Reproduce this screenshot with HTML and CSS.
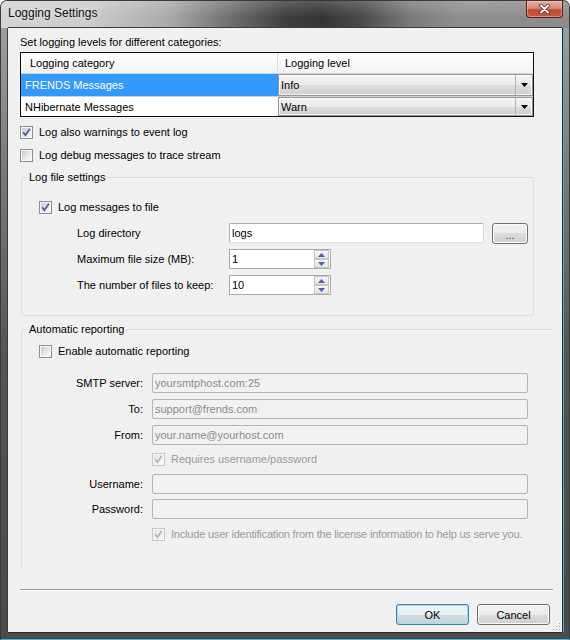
FILE: index.html
```html
<!DOCTYPE html>
<html lang="en">
<head>
  <meta charset="UTF-8" />
  <title>Logging Settings</title>
  <link rel="stylesheet" href="styles.css">
</head>
<body>
  <div class="window">
    <div class="titlebar">
      <span class="title">Logging Settings</span>
      <button class="close" aria-label="Close">
        <svg width="11" height="10" viewBox="0 0 11 10">
          <path d="M2 1.5 L9 8.5 M9 1.5 L2 8.5" stroke="#5b2c24" stroke-width="3.6" stroke-linecap="round" />
          <path d="M2 1.5 L9 8.5 M9 1.5 L2 8.5" stroke="#ffffff" stroke-width="2" stroke-linecap="round" />
        </svg>
      </button>
    </div>

    <div class="client">
      <div class="caption">Set logging levels for different categories:</div>

      <div class="grid">
        <div class="grid-row grid-head">
          <div class="cell col-cat head-cell">Logging category</div>
          <div class="cell col-level head-cell level-head">Logging level</div>
        </div>
        <div class="grid-row row-1">
          <div class="cell col-cat selected">FRENDS Messages</div>
          <div class="cell col-level">
            <div class="combo">
              <span class="combo-text">Info</span>
              <span class="combo-drop"><svg width="7" height="4" viewBox="0 0 7 4"><path d="M0 0 H7 L3.5 4 Z" fill="#000" /></svg></span>
            </div>
          </div>
        </div>
        <div class="grid-row row-2">
          <div class="cell col-cat">NHibernate Messages</div>
          <div class="cell col-level">
            <div class="combo">
              <span class="combo-text">Warn</span>
              <span class="combo-drop"><svg width="7" height="4" viewBox="0 0 7 4"><path d="M0 0 H7 L3.5 4 Z" fill="#000" /></svg></span>
            </div>
          </div>
        </div>
      </div>

      <label class="check check-first">
        <span class="box"><svg width="9" height="9" viewBox="0 0 9 9"><path d="M1.2 4.2 L3.4 7.2 L7.8 0.8" fill="none" stroke="#4c5c8f" stroke-width="1.7" /></svg></span>
        Log also warnings to event log
      </label>
      <label class="check check-second">
        <span class="box"></span>
        Log debug messages to trace stream
      </label>

      <div class="group group-file">
        <span class="group-title">Log file settings</span>
        <label class="check group-check">
          <span class="box"><svg width="9" height="9" viewBox="0 0 9 9"><path d="M1.2 4.2 L3.4 7.2 L7.8 0.8" fill="none" stroke="#4c5c8f" stroke-width="1.7" /></svg></span>
          Log messages to file
        </label>

        <div class="field-row first-field">
          <span class="field-label">Log directory</span>
          <span class="textbox dir-box">logs</span>
          <button class="btn browse">...</button>
        </div>
        <div class="field-row">
          <span class="field-label">Maximum file size (MB):</span>
          <span class="numeric">
            <span class="numeric-value">1</span>
            <span class="spin">
              <span class="spin-btn"><svg width="7" height="4" viewBox="0 0 7 4"><path d="M0 4 H7 L3.5 0 Z" fill="#4b62a6" /></svg></span>
              <span class="spin-btn"><svg width="7" height="4" viewBox="0 0 7 4"><path d="M0 0 H7 L3.5 4 Z" fill="#4b62a6" /></svg></span>
            </span>
          </span>
        </div>
        <div class="field-row">
          <span class="field-label">The number of files to keep:</span>
          <span class="numeric">
            <span class="numeric-value">10</span>
            <span class="spin">
              <span class="spin-btn"><svg width="7" height="4" viewBox="0 0 7 4"><path d="M0 4 H7 L3.5 0 Z" fill="#4b62a6" /></svg></span>
              <span class="spin-btn"><svg width="7" height="4" viewBox="0 0 7 4"><path d="M0 0 H7 L3.5 4 Z" fill="#4b62a6" /></svg></span>
            </span>
          </span>
        </div>
      </div>

      <div class="group group-report">
        <span class="group-title">Automatic reporting</span>
        <label class="check group-check">
          <span class="box"></span>
          Enable automatic reporting
        </label>

        <div class="form-row first-form">
          <span class="form-label">SMTP server:</span>
          <span class="textbox disabled">yoursmtphost.com:25</span>
        </div>
        <div class="form-row">
          <span class="form-label">To:</span>
          <span class="textbox disabled">support@frends.com</span>
        </div>
        <div class="form-row">
          <span class="form-label">From:</span>
          <span class="textbox disabled">your.name@yourhost.com</span>
        </div>
        <label class="check form-check check-auth">
          <span class="box box-disabled"><svg width="9" height="9" viewBox="0 0 9 9"><path d="M1.2 4.2 L3.4 7.2 L7.8 0.8" fill="none" stroke="#b4b4b4" stroke-width="1.7" /></svg></span>
          Requires username/password
        </label>
        <div class="form-row row-user">
          <span class="form-label">Username:</span>
          <span class="textbox disabled"></span>
        </div>
        <div class="form-row row-pass">
          <span class="form-label">Password:</span>
          <span class="textbox disabled"></span>
        </div>
        <label class="check form-check check-license">
          <span class="box box-disabled"><svg width="9" height="9" viewBox="0 0 9 9"><path d="M1.2 4.2 L3.4 7.2 L7.8 0.8" fill="none" stroke="#b4b4b4" stroke-width="1.7" /></svg></span>
          Include user identification from the license information to help us serve you.
        </label>
      </div>

      <div class="separator"></div>

      <div class="buttons">
        <button class="btn btn-default">OK</button>
        <button class="btn">Cancel</button>
      </div>

      <svg class="grip" width="9" height="9" viewBox="0 0 9 9">
        <rect x="7" y="1" width="1" height="1" fill="#a8a8a8" />
        <rect x="7" y="4" width="1" height="1" fill="#a8a8a8" />
        <rect x="4" y="4" width="1" height="1" fill="#a8a8a8" />
        <rect x="7" y="7" width="1" height="1" fill="#a8a8a8" />
        <rect x="4" y="7" width="1" height="1" fill="#a8a8a8" />
        <rect x="1" y="7" width="1" height="1" fill="#a8a8a8" />
      </svg>
    </div>
  </div>
</body>
</html>
```

FILE: styles.css
```css
* {
  box-sizing: border-box;
}

body {
  margin: 0;
  background: #ffffff;
  font-family: "Liberation Sans", Arial, sans-serif;
  font-size: 11px;
  color: #000;
}

.window {
  width: 570px;
  height: 640px;
  display: flex;
  flex-direction: column;
  border: 1px solid #3a3a3a;
  border-bottom-color: #34bde9;
  border-radius: 7px 7px 0 0;
  overflow: hidden;
  background: linear-gradient(180deg, #a4a4a4 0, #7c7c7c 160px, #545454 360px, #4a4a4a 100%);
}

/* title bar / glass */
.titlebar {
  height: 27px;
  flex: none;
  display: flex;
  align-items: flex-start;
  padding-left: 7px;
  background:
    linear-gradient(180deg, rgba(255,255,255,0.18) 0, rgba(255,255,255,0) 60%),
    linear-gradient(90deg, #d3d3d3 0, #cbcbcb 90px, #a8a8a8 170px, #6e6e6e 230px, #3e3e3e 285px, #353535 320px, #4a4a4a 360px, #7b7b7b 410px, #8e8e8e 460px, #8c8c8c 100%);
}

.title {
  margin-top: 5px;
  font-size: 12px;
  line-height: 14px;
  color: #111;
  text-shadow: 0 0 6px rgba(255,255,255,0.8);
}

.close {
  margin-left: auto;
  margin-right: 6px;
  width: 37px;
  height: 17px;
  padding: 0;
  border: 1px solid #4d2219;
  border-top: none;
  border-radius: 0 0 4px 4px;
  background: linear-gradient(180deg, #e6ad9f 0, #d98876 45%, #c24a31 55%, #c8583d 100%);
  box-shadow: inset 0 0 0 1px rgba(255,210,200,0.45);
  display: flex;
  align-items: center;
  justify-content: center;
}

/* client area */
.client {
  flex: 1;
  position: relative;
  margin: 0 7px 7px 7px;
  padding: 7px 0 0 12px;
  background: #f0f0f0;
  box-shadow: -1px 0 0 #3b3b3b, 0 -1px 0 #3b3b3b, 1px 0 0 #2b2b2b, 2px 0 0 #3db3e2, 0 1px 0 #2b2b2b;
}

.caption {
  line-height: 14px;
}

/* grid */
.grid {
  width: 514px;
  margin-top: 3px;
  border: 1px solid #101010;
  background: #fff;
}

.grid-row {
  display: flex;
}

.cell {
  display: flex;
  align-items: center;
  white-space: nowrap;
}

.col-cat {
  width: 257px;
  padding-left: 4px;
}

.col-level {
  width: 255px;
}

.grid-head {
  height: 21px;
  border-bottom: 1px solid #d5d5d5;
  background: linear-gradient(180deg, #ffffff 0, #f7f8f9 60%, #f1f2f3 100%);
}

.head-cell {
  padding-left: 9px;
}

.grid-head .col-cat {
  border-right: 1px solid #dcdcdc;
}

.level-head {
  padding-left: 7px;
}

.row-1 {
  height: 23px;
  border-bottom: 1px solid #d0d0d0;
}

.row-2 {
  height: 19px;
}

.selected {
  background: #3399ff;
  color: #fff;
}

.combo {
  width: 100%;
  height: 100%;
  display: flex;
  align-items: center;
  border: 1px solid #979797;
  background: linear-gradient(180deg, #f2f2f2 0, #ebebeb 50%, #dddddd 50%, #d0d0d0 100%);
  box-shadow: inset 0 0 0 1px rgba(255,255,255,0.7);
}

.combo-text {
  flex: 1;
  padding-left: 2px;
}

.combo-drop {
  width: 17px;
  height: 100%;
  display: flex;
  align-items: center;
  justify-content: center;
  border-left: 1px solid #b4b4b4;
}

/* checkboxes */
.check {
  display: flex;
  align-items: center;
  gap: 6px;
  height: 16px;
  white-space: nowrap;
}

.check-first {
  margin-top: 7px;
}

.check-second {
  margin-top: 7px;
}

.box {
  width: 13px;
  height: 13px;
  flex: none;
  padding: 1px;
  border: 1px solid #8e8f8f;
  background:
    linear-gradient(135deg, #c4c8ce 0, #e9eaec 60%, #f8f8f8 100%) content-box,
    #f7f7f7;
  display: flex;
  align-items: center;
  justify-content: center;
}

.box svg {
  overflow: visible;
}

.box-disabled {
  border-color: #c6c6c6;
  background:
    linear-gradient(135deg, #e4e4e4 0, #f2f2f2 60%, #f8f8f8 100%) content-box,
    #f7f7f7;
}

/* group boxes */
.group {
  display: flex;
  flex-direction: column;
  align-items: flex-start;
  border: 1px solid #d5dfe5;
  border-radius: 3px;
  margin-left: 1px;
}

.group-title {
  margin: -8px 0 0 5px;
  padding: 0 2px;
  line-height: 14px;
  background: #f0f0f0;
}

.group-file {
  width: 513px;
  margin-top: 14px;
  padding-bottom: 20px;
}

.group-check {
  margin-top: 15px;
  margin-left: 17px;
}

.field-row {
  display: flex;
  align-items: center;
  height: 20px;
  margin-top: 6px;
  margin-left: 55px;
}

.first-field {
  margin-top: 8px;
}

.field-label {
  width: 152px;
  flex: none;
}

.textbox {
  height: 20px;
  display: flex;
  align-items: center;
  padding: 0 2px;
  border: 1px solid #abadb3;
  border-right-color: #d9dbe0;
  border-bottom-color: #dfe3e8;
  border-radius: 2px;
  background: #fff;
  white-space: nowrap;
}

.dir-box {
  width: 255px;
}

.btn {
  height: 21px;
  width: 73px;
  padding: 0;
  border: 1px solid #707070;
  border-radius: 3px;
  background: linear-gradient(180deg, #f2f2f2 0, #ebebeb 50%, #dddddd 50%, #cfcfcf 100%);
  box-shadow: inset 0 0 0 1px #fbfbfb;
  font-family: "Liberation Sans", Arial, sans-serif;
  font-size: 11px;
  color: #000;
}

.browse {
  width: 36px;
  margin-left: 8px;
  padding-top: 3px;
  color: #3a3a5a;
}

.numeric {
  width: 102px;
  height: 20px;
  display: flex;
  align-items: center;
  border: 1px solid #a9a9a9;
  background: #fff;
}

.numeric-value {
  flex: 1;
  padding-left: 2px;
}

.spin {
  width: 15px;
  height: 18px;
  margin-right: 1px;
  display: flex;
  flex-direction: column;
}

.spin-btn {
  flex: 1;
  display: flex;
  align-items: center;
  justify-content: center;
  border: 1px solid #c6c6c6;
  background: linear-gradient(180deg, #f8f8f8 0, #e3e3e3 100%);
}

/* automatic reporting */
.group-report {
  width: 531px;
  height: 239px;
  margin-top: 13px;
  border-right: none;
  border-bottom: none;
  border-radius: 3px 0 0 0;
}

.group-report .group-check {
  margin-top: 7px;
}

.form-row {
  display: flex;
  align-items: center;
  gap: 9px;
  height: 20px;
  margin-top: 6px;
}

.first-form {
  margin-top: 14px;
}

.form-label {
  width: 121px;
  flex: none;
  text-align: right;
}

.form-row .textbox {
  width: 376px;
}

.textbox.disabled {
  background: #f1f1f1;
  border-color: #b5b5b5;
  color: #8c8c8c;
}

.form-check {
  margin-left: 130px;
  color: #9a9a9a;
}

.check-auth {
  margin-top: 6px;
}

.row-user {
  margin-top: 7px;
}

.row-pass {
  margin-top: 5px;
}

.check-license {
  margin-top: 7px;
  letter-spacing: -0.2px;
}

.separator {
  width: 533px;
  margin-top: 21px;
  border-top: 1px solid #a0a0a0;
  border-bottom: 1px solid #ffffff;
}

.buttons {
  width: 530px;
  margin-top: 13px;
  display: flex;
  justify-content: flex-end;
  gap: 8px;
}

.btn-default {
  border-color: #3c7fb1;
  box-shadow: inset 0 0 0 1px #9fdcf6;
  background: linear-gradient(180deg, #f0f4f7 0, #e7edf1 50%, #d6dde3 50%, #c9d1d8 100%);
}

.grip {
  position: absolute;
  right: 1px;
  bottom: 1px;
}
```
